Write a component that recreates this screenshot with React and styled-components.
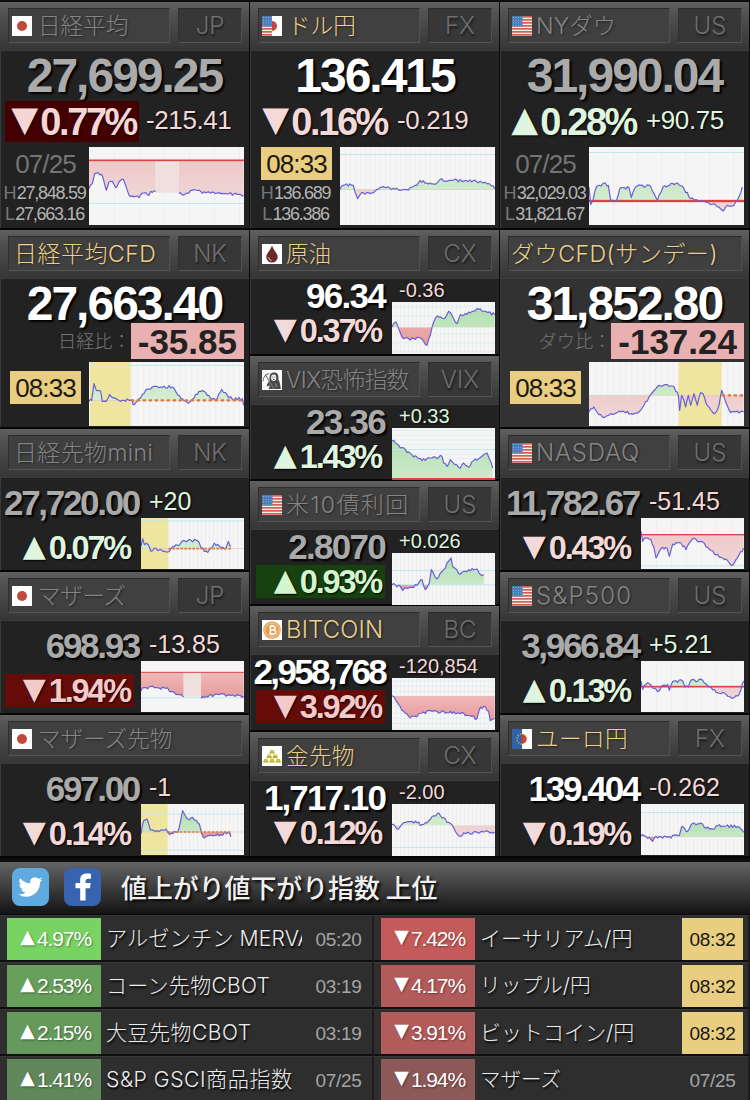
import React from "react";
import styled, { createGlobalStyle, css } from "styled-components";

const Global = createGlobalStyle`
  * { box-sizing: border-box; }
  body { margin: 0; background: #0b0b0b; }
`;

const NUM = `"Liberation Sans", Arial, sans-serif`;
const NAME = `Inter, "Noto Sans CJK JP", sans-serif`;

const UP = "#dff5df";
const DOWN = "#f4d9d9";

const Page = styled.div`
  width: 750px;
  height: 1100px;
  overflow: hidden;
  background: #0d0d0d;
  font-family: ${NUM};
  white-space: nowrap;
`;

const Board = styled.main`
  display: flex;
  padding-top: 2px;
  height: 862px;
`;

const Card = styled.section`
  height: ${(p) => p.$h}px;
  display: flex;
  flex-direction: column;
  background: ${(p) => p.$bg || "#222"};
  border-bottom: 2px solid #060606;
  border-right: 1px solid #0a0a0a;
  box-shadow: inset 1px 0 0 #3a3a3a;
`;

const Head = styled.header`
  flex: 0 0 48px;
  display: flex;
  gap: 8px;
  padding: 6px 7px 7px 8px;
  background: linear-gradient(#606060, #515151 25%, #363636);
  border-bottom: 1px solid #3c3c3c;
`;

const Slot = styled.div`
  height: 35px;
  display: flex;
  align-items: center;
  background: ${(p) => (p.$dark ? "#373737" : "#404040")};
  border: 1px solid;
  border-color: #2c2c2c #505050 #545454 #303030;
`;

const NameSlot = styled(Slot)`
  flex: 1;
  padding-left: ${(p) => p.$pad}px;
  gap: ${(p) => p.$gap}px;
`;

const CodeSlot = styled(Slot)`
  width: 64px;
  justify-content: center;
  font: 300 24px/34px ${NAME};
  color: #6e6e6e;
  text-shadow: 1px 2px 2px #1c1c1c;
`;

const Name = styled.span`
  font: 300 ${(p) => p.$size}px/32px ${NAME};
  letter-spacing: ${(p) => p.$ls}px;
  color: ${(p) => (p.$live ? "#ecd08a" : "#858585")};
  text-shadow: 1px 1px 2px #222;
`;

const Price = styled.div`
  font: bold ${(p) => (p.$big ? 48 : 35)}px / ${(p) => (p.$big ? 46 : 36)}px ${NUM};
  letter-spacing: ${(p) => p.$ls}px;
  color: ${(p) => (p.$live ? "#fff" : "#aaa")};
  text-shadow: 2px 2px 2px #000;
`;

const BigPrice = styled(Price)`
  height: 48px;
  text-align: center;
`;

const Line = styled.div`
  display: flex;
`;

const badgeTone = {
  red: css`background: #660c08; color: #f4c9c9;`,
  darkRed: css`background: #440000; color: #f6d5d5;`,
  green: css`background: #17420f; color: #d3f5cf;`,
};

const Percent = styled.div`
  display: flex;
  justify-content: flex-end;
  align-items: center;
  font: bold ${(p) => (p.$big ? 38 : 32.5)}px / 1 ${NUM};
  letter-spacing: ${(p) => (p.$big ? -2.4 : -2.2)}px;
  width: ${(p) => (p.$big ? 134 : 129)}px;
  height: ${(p) => (p.$big ? 41 : 33)}px;
  padding: ${(p) => (p.$big ? "1px 3px 0 0" : "1px 4px 0 0")};
  color: ${(p) => (p.$up ? UP : DOWN)};
  text-shadow: 1px 1px 2px #000;
  ${(p) => p.$tone && badgeTone[p.$tone]}
`;

const Arrow = styled.span`
  font: ${(p) => p.$size}px/1 "DejaVu Sans", sans-serif;
  letter-spacing: 0;
  margin-right: ${(p) => p.$gap}px;
  margin-bottom: 5px;
`;

const Change = styled.div`
  font: ${(p) => p.$size}px/1.1 ${NUM};
  color: ${(p) => (p.$up ? UP : DOWN)};
  letter-spacing: ${(p) => p.$ls || 0}px;
  text-shadow: 1px 1px 2px #000;
`;

const Side = styled.div`
  width: 89px;
  display: flex;
  flex-direction: column;
  align-items: center;
`;

const Clock = styled.div`
  width: 71px;
  height: 33px;
  margin: ${(p) => p.$top || 0}px 0 3px 2px;
  font: 26px/34px ${NUM};
  letter-spacing: -0.9px;
  text-align: center;
  ${(p) =>
    p.$live
      ? css`background: #e9cd80; color: #1d1a12;`
      : css`color: #757575;`}
`;

const HighLow = styled.div`
  height: 20.5px;
  font: 18px/21px ${NUM};
  letter-spacing: -1.25px;
  color: #b4b4b4;
  b { font-weight: normal; color: #777; margin-right: 1.5px; }
`;

const Plot = styled.svg`
  display: block;
  flex: none;
`;

const BigBody = styled.div`
  padding-top: 2px;
`;

const RateLine = styled(Line)`
  height: 46px;
  padding-left: 5px;
  gap: 7px;
  ${Change} { padding-top: 5px; }
`;

const CompareLine = styled(Line)`
  justify-content: flex-end;
  align-items: flex-start;
  height: 39px;
  margin-top: -6px;
  padding-right: 5px;
`;

const CompareLabel = styled.span`
  font: 300 18.2px/37px ${NAME};
  color: #757575;
`;

const CompareValue = styled.span`
  height: 36px;
  padding: 0 7px;
  font: bold 35px/37px ${NUM};
  color: #222;
  background: #e8b0b0;
`;

const SmallBody = styled.div`
  display: flex;
  justify-content: space-between;
  padding: 0 5px;
`;

const SmallLeft = styled.div`
  width: 135px;
  display: flex;
  flex-direction: column;
  ${Price} {
    margin-top: ${(p) => (p.$mid ? -1.5 : 7)}px;
    margin-right: ${(p) => (p.$mid ? 6 : 1)}px;
    height: ${(p) => (p.$mid ? 36.5 : 36)}px;
    display: flex;
    justify-content: flex-end;
  }
  ${Percent} { margin-top: ${(p) => (p.$mid ? 0 : 10)}px; }
`;

const SmallRight = styled.div`
  width: 103px;
  display: flex;
  flex-direction: column;
  ${Change} {
    height: ${(p) => (p.$mid ? 23 : 40)}px;
    padding-top: ${(p) => (p.$mid ? 0 : 9.5)}px;
    padding-left: ${(p) => (p.$mid ? 7 : 8)}px;
  }
`;

const Column = styled.div`
  width: 250px;
  display: flex;
  flex-direction: column;
  &:nth-child(2) ${BigBody} { padding-left: 1px; }
  &:nth-child(2) ${SmallBody} { padding: 0 4px 0 6px; }
`;

/* ---- charts ---- */

// Adds small repeatable wobble between the given points.
function roughen(points, seed) {
  let s = seed;
  const rnd = () => {
    s = (s * 16807) % 2147483647;
    return s / 2147483647 - 0.5;
  };
  const out = [points[0]];
  for (let i = 1; i < points.length; i++) {
    const [x0, y0] = points[i - 1];
    const [x1, y1] = points[i];
    const n = Math.max(1, Math.round((x1 - x0) / 5));
    for (let k = 1; k <= n; k++) {
      const t = k / n;
      out.push([x0 + (x1 - x0) * t, y0 + (y1 - y0) * t + (k < n ? rnd() * 9 : 0)]);
    }
  }
  return out;
}

const parse = (str) => str.split(" ").map((p) => p.split(",").map(Number));

function Chart({ id, w, h, base, lines, refLine, cyan = [], grid, rules, zone, dots, gap, strong, noBase }) {
  const W = w * 3;
  const H = h * 3;
  const segs = lines.map((l, i) => roughen(parse(l), 77 + i * 13 + id.length * 31));
  const areas = segs
    .map((s) => `M${s[0][0]},${base} ${s.map((p) => `L${p[0]},${p[1]}`).join(" ")} L${s[s.length - 1][0]},${base}Z`)
    .join(" ");
  const stroke = segs.map((s) => "M" + s.map((p) => p.join(",")).join(" L")).join(" ");
  const verticals = [];
  if (grid) for (let x = grid; x < W; x += grid) verticals.push(x);
  const horizontals = [];
  if (rules) for (let y = rules / 2; y < H; y += rules) horizontals.push(y);
  return (
    <Plot width={w} height={h} viewBox={`0 0 ${W} ${H}`} preserveAspectRatio="none">
      <defs>
        <clipPath id={`${id}u`}><rect width={W} height={base} /></clipPath>
        <clipPath id={`${id}d`}><rect y={base} width={W} height={H} /></clipPath>
        <linearGradient id={`${id}g`} x1="0" y1="0" x2="0" y2="1">
          <stop offset="0" stopColor={strong ? "#b4dfb1" : "#c9e8c6"} />
          <stop offset="1" stopColor={strong ? "#cdebcb" : "#d8efd6"} />
        </linearGradient>
        <linearGradient id={`${id}r`} x1="0" y1="0" x2="0" y2="1">
          <stop offset="0" stopColor={strong ? "#f0b9b9" : "#efc8c8"} />
          <stop offset="1" stopColor={strong ? "#e69a9a" : "#eed6d6"} />
        </linearGradient>
      </defs>
      <rect width={W} height={H} fill="#f5f5f5" />
      {verticals.map((x) => <rect key={x} x={x} width="2" height={H} fill="#eaeaea" />)}
      {horizontals.map((y) => <rect key={y} y={y} width={W} height="2" fill="#daeef1" />)}
      {zone && <rect x={zone[0]} width={zone[1] - zone[0]} height={H} fill="#eee5a0" />}
      <path d={areas} fill={`url(#${id}g)`} clipPath={`url(#${id}u)`} />
      <path d={areas} fill={`url(#${id}r)`} clipPath={`url(#${id}d)`} />
      {gap && <rect x={gap[0]} y={base} width={gap[1] - gap[0]} height={gap[2] - base} fill="#efdfdf" />}
      {cyan.map((y) => <rect key={y} y={y - 1} width={W} height="3" fill="#bfe9ec" />)}
      {!noBase && !refLine && <rect y={base - 1} width={W} height="2" fill="#d5cfc0" />}
      {refLine && <rect y={base - refLine / 2} width={W} height={refLine} fill="#dc4444" />}
      <path d={stroke} fill="none" stroke="#6a60d6" strokeWidth="3.6" strokeLinejoin="round" />
      {dots && (
        <line x1={dots[0]} x2={dots[1]} y1={base} y2={base} stroke="#dd7a3c" strokeWidth={w > 110 ? 7 : 5} strokeDasharray={w > 110 ? "10 8" : "8 4"} />
      )}
    </Plot>
  );
}

/* ---- small icons ---- */

const IconSvg = styled.svg`
  display: block;
  flex: none;
  width: 20px;
  height: 20px;
`;

const Stripes = ({ w = 20 }) => (
  <>
    <rect width={w} height="20" fill="#f6eeee" />
    {[0, 1, 2, 3, 4, 5, 6].map((i) => (
      <rect key={i} y={i * 3} width={w} height="1.7" fill="#d4604f" />
    ))}
  </>
);

const Stars = ({ w, h }) => (
  <>
    <rect width={w} height={h} fill="#4a7bb5" />
    {[1.6, 4.2, 6.8, 9.2].map((y) =>
      [1.5, 4, 6.5, 9].filter((x) => x < w && y < h).map((x) => (
        <circle key={`${x}-${y}`} cx={x} cy={y} r="0.5" fill="#a9c3e0" />
      ))
    )}
  </>
);

const icons = {
  jp: (
    <>
      <rect width="20" height="20" fill="#fff" />
      <circle cx="10" cy="10" r="5" fill="#bf4a3b" />
    </>
  ),
  us: (
    <>
      <Stripes />
      <Stars w={10.5} h={10.5} />
    </>
  ),
  usjp: (
    <>
      <rect width="20" height="20" fill="#fff" />
      <Stripes w={10} />
      <Stars w={10} h={10.5} />
      <path d="M10 5a5 5 0 0 1 0 10z" fill="#bf4a3b" />
    </>
  ),
  eujp: (
    <>
      <rect width="20" height="20" fill="#fff" />
      <rect width="10" height="20" fill="#2f62a8" />
      <circle cx="10" cy="10" r="5" fill="none" stroke="#a9b455" strokeWidth="1.4" strokeDasharray="1.4 1.2" />
      <path d="M10 4.300a5.700 5.700 0 0 1 0 11.400z" fill="#fff" />
      <path d="M9.500 5a5.200 5 0 0 1 0 10z" fill="#c8402f" />
    </>
  ),
  oil: (
    <>
      <rect width="20" height="20" fill="#fff" />
      <path d="M10 1.5C8.8 6 4.3 9 4.3 13.2a5.7 5.4 0 0 0 11.4 0C15.7 9 11.2 6 10 1.5z" fill="#69282b" />
      <path d="M6.6 13.2a3.6 3.6 0 0 0 3 3.4" stroke="#e3cfcf" strokeWidth="1" fill="none" />
    </>
  ),
  reaper: (
    <>
      <rect width="20" height="20" fill="#fafafa" />
      <path d="M7.6 10.5C7 5 8.6 2.5 12 2.5s5 2.600 4.400 7c1.400 2.500 2.300 6 2.300 9.500H6.500L8 15.500l-3.500 1 .6-2.200z" fill="#4a4a4a" />
      <ellipse cx="11.700" cy="7.700" rx="2.600" ry="3.300" fill="#f2f2f2" />
      <path d="M10.200 7.200h1M12.400 7.200h1M10.900 9.500h1.800" stroke="#444" strokeWidth=".9" />
      <path d="M3.200 4.500 12 19M1 11.500C1 7 3 4.500 7.500 3.500" stroke="#777" strokeWidth="1.100" fill="none" />
      <path d="M13.500 13.500l1 3.500" stroke="#aaa" strokeWidth=".8" />
    </>
  ),
  btc: (
    <>
      <rect width="20" height="20" fill="#fff" />
      <circle cx="10" cy="10" r="8.800" fill="#e69a4c" />
      <circle cx="10" cy="10" r="7.200" fill="none" stroke="#fbe3c6" strokeWidth=".8" />
      <path d="M7.300 6.200h4a1.900 1.900 0 0 1 0 3.800H8.300M8.300 10h3.400a2 2 0 0 1 0 4H7.300M8.400 6.200V14M9.400 4.800v1.600M11.200 4.800v1.600M9.400 13.800v1.500M11.200 13.800v1.500" fill="none" stroke="#fff" strokeWidth="1.500" />
    </>
  ),
  gold: (
    <>
      <rect width="20" height="20" fill="#fff" />
      {[[7.300, 4], [4.500, 8.600], [10.300, 8.600], [1, 13], [7.200, 13], [13.400, 13]].map(([x, y]) => (
        <g key={`${x}-${y}`}>
          <path d={`M${x + 1.300} ${y}h3l1.400 3.600H${x}z`} fill="#b9b32c" />
          <path d={`M${x + 1.700} ${y + 0.700}h2.200l.2.700h-2.600z`} fill="#e8e48a" />
        </g>
      ))}
    </>
  ),
};

const Icon = ({ kind }) => <IconSvg viewBox="0 0 20 20">{icons[kind]}</IconSvg>;

/* ---- cards ---- */

function CardHead({ name, code, icon, live, size = 22.6, ls = 0, gap = 6, pad }) {
  return (
    <Head>
      <NameSlot $pad={pad ?? (icon ? 3 : 5)} $gap={gap}>
        {icon && <Icon kind={icon} />}
        <Name $live={live} $size={size} $ls={ls}>{name}</Name>
      </NameSlot>
      {code && <CodeSlot $dark>{code}</CodeSlot>}
    </Head>
  );
}

const isUp = (c) => c.startsWith("+");

function Rate({ value, up, big, tone }) {
  return (
    <Percent $big={big} $up={up} $tone={tone}>
      <Arrow $size={big ? 35 : 30} $gap={big ? 2 : 3}>{up ? "▲" : "▼"}</Arrow>
      {value}
    </Percent>
  );
}

function BigCard({ h, head, live, price, rate, tone, change, time, high, low, chart }) {
  const up = isUp(change);
  return (
    <Card $h={h}>
      <CardHead live={live} {...head} />
      <BigBody>
        <BigPrice $big $live={live} $ls={-2}>{price}</BigPrice>
        <RateLine>
          <Rate big value={rate} up={up} tone={tone} />
          <Change $size={26} $ls={-0.4} $up={up}>{change}</Change>
        </RateLine>
        <Line>
          <Side>
            <Clock $live={live}>{time}</Clock>
            <HighLow><b>H</b>{high}</HighLow>
            <HighLow><b>L</b>{low}</HighLow>
          </Side>
          <Chart w={155} h={78} {...chart} />
        </Line>
      </BigBody>
    </Card>
  );
}

function CompareCard({ h, bg, head, price, label, diff, chart }) {
  return (
    <Card $h={h} $bg={bg}>
      <CardHead live {...head} />
      <BigBody>
        <BigPrice $big $live $ls={-2}>{price}</BigPrice>
        <CompareLine>
          <CompareLabel>{label}</CompareLabel>
          <CompareValue>{diff}</CompareValue>
        </CompareLine>
        <Line>
          <Side><Clock $live $top={9}>08:33</Clock></Side>
          <Chart w={155} h={64} {...chart} />
        </Line>
      </BigBody>
    </Card>
  );
}

function SmallCard({ h, mid, head, live, price, ls = -2.3, rate, tone, change, chart }) {
  const up = isUp(change);
  return (
    <Card $h={h}>
      <CardHead live={live} {...head} />
      <SmallBody>
        <SmallLeft $mid={mid}>
          <Price $live={live} $ls={ls}>{price}</Price>
          <Rate value={rate} up={up} tone={tone} />
        </SmallLeft>
        <SmallRight $mid={mid}>
          <Change $size={mid ? 20 : 25} $up={up}>{change}</Change>
          <Chart w={103} h={mid ? 52 : 51} {...chart} />
        </SmallRight>
      </SmallBody>
    </Card>
  );
}

/* ---- ranking ---- */

const RankBar = styled.div`
  height: 53px;
  display: flex;
  align-items: center;
  padding: 0 0 2px 12px;
  background: linear-gradient(#646464, #3c3c3c 50%, #131313);
  border-bottom: 1px solid #060606;
`;

const Social = styled.svg`
  width: 37px;
  height: 38px;
  margin-right: 15px;
  border-radius: 8px;
`;

const RankTitle = styled.h2`
  margin: 0 0 0 5px;
  font: 500 25.9px/50px "Noto Sans CJK JP", sans-serif;
  color: #f0f0f0;
  text-shadow: 2px 2px 3px #000;
`;

const RankGrid = styled.div`
  display: grid;
  grid-template-columns: 374px 376px;
  grid-auto-rows: 47px;
`;

const RankRow = styled.div`
  display: flex;
  align-items: flex-start;
  padding: 3px ${(p) => (p.$left ? 3 : 5)}px 0 7px;
  background: #2e2e2e;
  border-bottom: 2px solid #0f0f0f;
  border-right: 2px solid #1c1c1c;
  border-top: 1px solid #383838;
`;

const RankRate = styled.div`
  flex: 0 0 94px;
  height: 42px;
  margin-top: -1px;
  padding-right: 10px;
  display: flex;
  align-items: center;
  justify-content: flex-end;
  font: 21px/42px ${NUM};
  letter-spacing: -1.1px;
  color: #fff;
  text-shadow: 1px 1px 2px rgba(0, 0, 0, 0.4);
  background: ${(p) => p.$color};
`;

const RankName = styled.div`
  width: ${(p) => (p.$wide ? 196 : 201)}px;
  height: 40px;
  margin-left: 5px;
  overflow: hidden;
  font: 300 ${(p) => p.$size}px/39px ${NAME};
  letter-spacing: ${(p) => p.$ls || 0}px;
  color: #ececec;
  text-shadow: 1px 2px 2px #000;
`;

const RankTime = styled.div`
  width: 61px;
  height: 42px;
  margin: -1px 0 0 auto;
  font: 19px/43px ${NUM};
  letter-spacing: -0.3px;
  text-align: center;
  ${(p) => (p.$live ? css`background: #e9cd80; color: #1a1811;` : css`color: #a5a5a5;`)}
`;

const ranks = [
  { r: "4.97%", up: true, c: "#79d363", n: "アルゼンチン MERVA", t: "05:20", s: 21.2, ls: 0.1 },
  { r: "7.42%", c: "#c45a59", n: "イーサリアム/円", t: "08:32", live: true, s: 21 },
  { r: "2.53%", up: true, c: "#67a05b", n: "コーン先物CBOT", t: "03:19", s: 21, ls: 0.3 },
  { r: "4.17%", c: "#b35b5a", n: "リップル/円", t: "08:32", live: true, s: 20.7 },
  { r: "2.15%", up: true, c: "#659a5c", n: "大豆先物CBOT", t: "03:19", s: 21, ls: 0.5 },
  { r: "3.91%", c: "#b15b5a", n: "ビットコイン/円", t: "08:32", live: true, s: 21 },
  { r: "1.41%", up: true, c: "#61875c", n: "S&P GSCI商品指数", t: "07/25", s: 21.2, ls: 0.5 },
  { r: "1.94%", c: "#8d5858", n: "マザーズ", t: "07/25", s: 20.5 },
];

export default function App() {
  return (
    <Page>
      <Global />
      <Board>
        <Column>
          <BigCard h={228} head={{ name: "日経平均", code: "JP", icon: "jp" }} price="27,699.25" rate="0.77%" tone="darkRed" change="-215.41" time="07/25" high="27,848.59" low="27,663.16"
            chart={{ id: "nk", base: 40, refLine: 5, cyan: [169], grid: 75, gap: [200, 270, 137], lines: ["0,125 10,110 17,80 38,82 52,130 60,105 70,103 80,122 90,105 103,97 110,115 120,145 150,152 160,138 180,145 185,133 200,133", "270,140 278,142 310,130 350,137 380,140 420,140 450,142 464,145"] }} />
          <CompareCard h={199} head={{ name: "日経平均CFD", code: "NK", size: 23, ls: 0.5 }} price="27,663.40" label="日経比：" diff="-35.85"
            chart={{ id: "nkcfd", base: 115, cyan: [10], grid: 18, zone: [3, 125], dots: [125, 465], lines: ["0,118 8,115 15,65 22,85 35,88 40,118 52,118 62,98 80,110 100,115 120,115 130,115 132,128 150,110 170,85 190,75 250,75 262,92 280,110 295,122 310,112 330,88 345,88 355,100 380,115 398,82 415,100 430,112 460,110 464,130"] }} />
          <SmallCard h={143} head={{ name: "日経先物mini", code: "NK", size: 23, ls: 0.35 }} price="27,720.00" rate="0.07%" change="+20"
            chart={{ id: "mini", base: 92, cyan: [8], grid: 12, zone: [0, 82], dots: [82, 270], lines: ["0,85 5,62 10,80 22,80 30,100 40,90 50,98 80,102 90,92 110,82 125,68 170,68 180,90 200,103 220,75 235,85 255,90 262,70 270,85"] }} />
          <SmallCard h={143} head={{ name: "マザーズ", code: "JP", icon: "jp", ls: -0.4 }} price="698.93" rate="1.94%" tone="red" change="-13.85"
            chart={{ id: "moth", base: 34, refLine: 3, strong: true, cyan: [110], gap: [128, 180, 107], lines: ["0,90 10,80 40,80 75,82 95,92 115,102 128,107", "180,112 190,110 220,102 270,103 308,106"] }} />
          <SmallCard h={143} head={{ name: "マザーズ先物", icon: "jp" }} price="697.00" rate="0.14%" change="-1"
            chart={{ id: "mothf", base: 84, strong: true, cyan: [30, 138], grid: 12, zone: [0, 80], dots: [80, 270], lines: ["0,90 8,50 18,45 28,78 50,80 75,75 82,88 110,85 118,55 125,20 140,45 155,40 175,60 182,88 190,102 205,95 240,92 262,85 270,98"] }} />
        </Column>
        <Column>
          <BigCard h={228} live head={{ name: "ドル円", code: "FX", icon: "usjp" }} price="136.415" rate="0.16%" change="-0.219" time="08:33" high="136.689" low="136.386"
            chart={{ id: "fx", base: 128, cyan: [22], grid: 15, lines: ["0,127 10,115 40,115 45,135 53,155 65,137 90,140 105,132 120,122 200,128 215,120 230,115 240,100 260,108 285,112 300,98 330,100 420,103 450,112 464,125"] }} />
          <SmallCard mid h={126} live head={{ name: "原油", code: "CX", icon: "oil", gap: 4 }} price="96.34" ls={-1.7} rate="0.37%" change="-0.36"
            chart={{ id: "oil", base: 76, strong: true, noBase: true, grid: 12, rules: 27, lines: ["0,75 12,60 20,80 30,105 50,110 85,108 95,118 105,130 115,100 125,60 132,45 155,50 170,28 185,50 195,65 205,38 215,40 240,28 260,22 280,28 308,38"] }} />
          <SmallCard mid h={125} head={{ name: "VIX恐怖指数", code: "VIX", icon: "reaper", gap: 4, ls: -0.5 }} price="23.36" ls={-1.7} rate="1.43%" change="+0.33"
            chart={{ id: "vix", base: 153, refLine: 6, strong: true, cyan: [64], rules: 14, lines: ["0,38 20,52 40,65 60,80 80,92 100,97 120,90 150,85 155,105 165,115 175,95 190,110 205,120 215,105 230,118 245,98 260,92 275,80 285,75 292,92 302,120"] }} />
          <SmallCard mid h={125} head={{ name: "米10債利回", code: "US", icon: "us", gap: 4, size: 23, ls: 1.4 }} price="2.8070" ls={-1.7} rate="0.93%" tone="green" change="+0.026"
            chart={{ id: "us10", base: 95, strong: true, noBase: true, grid: 12, cyan: [52, 95], lines: ["0,95 25,100 32,112 50,105 75,97 90,80 100,110 112,90 118,50 135,78 155,50 170,25 177,15 182,40 200,62 230,50 255,48 272,68 275,65"] }} />
          <SmallCard mid h={126} live head={{ name: "BITCOIN", code: "BC", icon: "btc", gap: 4, size: 23.8, ls: 0.2 }} price="2,958,768" ls={-2.7} rate="3.92%" tone="red" change="-120,854"
            chart={{ id: "btc", base: 53, strong: true, noBase: true, grid: 12, rules: 16, lines: ["0,53 12,68 20,80 35,100 50,115 70,115 90,105 120,100 200,105 240,115 255,122 262,95 275,85 290,100 295,128 308,122"] }} />
          <SmallCard mid h={126} live head={{ name: "金先物", code: "CX", icon: "gold", gap: 4, ls: 0.3 }} price="1,717.10" ls={-1.9} rate="0.12%" change="-2.00"
            chart={{ id: "gold", base: 64, grid: 12, cyan: [130], noBase: true, lines: ["0,62 20,75 40,55 60,52 90,62 110,50 137,27 150,42 170,55 180,62 190,82 200,95 225,85 260,88 270,82 308,84"] }} />
        </Column>
        <Column>
          <BigCard h={228} head={{ name: "NYダウ", code: "US", icon: "us", gap: 4, size: 23.2, ls: 0.2 }} price="31,990.04" rate="0.28%" change="+90.75" time="07/25" high="32,029.03" low="31,821.67"
            chart={{ id: "dow", base: 162, refLine: 7, cyan: [16], grid: 72, lines: ["0,120 5,172 12,160 22,120 45,108 58,115 65,160 82,162 92,125 120,122 127,152 140,120 155,115 185,118 205,160 222,120 265,108 285,125 305,155 330,162 370,172 390,180 402,192 415,175 435,175 445,160 460,120"] }} />
          <CompareCard h={199} bg="#323232" head={{ name: "ダウCFD(サンデー)", size: 23.2, ls: 0.4, pad: 2 }} price="31,852.80" label="ダウ比：" diff="-137.24"
            chart={{ id: "dowcfd", base: 100, grid: 18, zone: [268, 398], dots: [398, 465], lines: ["0,150 15,135 30,158 45,167 65,155 95,150 135,155 155,145 180,105 205,75 235,68 250,72 265,90 268,100", "268,100 272,145 278,100 290,135 298,100 305,130 315,95 325,130 335,92 342,95 355,130 370,150 380,152 390,130 398,85 410,120 425,152 440,150 464,150"] }} />
          <SmallCard h={143} head={{ name: "NASDAQ", code: "US", icon: "us", gap: 4, size: 24, ls: 0.7 }} price="11,782.67" rate="0.43%" change="-51.45"
            chart={{ id: "ndq", base: 50, refLine: 4, grid: 45, cyan: [143], lines: ["0,40 5,70 15,60 30,65 38,85 45,120 55,100 65,88 78,90 85,115 95,78 120,75 135,95 155,62 180,70 200,88 225,110 245,120 265,135 275,142 285,125 308,90"] }} />
          <SmallCard h={143} head={{ name: "S&P500", code: "US", icon: "us", gap: 4, size: 24, ls: 1.2 }} price="3,966.84" rate="0.13%" change="+5.21"
            chart={{ id: "spx", base: 77, refLine: 5, grid: 45, lines: ["0,60 5,85 20,65 30,72 50,92 62,75 80,70 85,88 95,62 125,60 132,78 142,78 150,58 185,58 205,78 230,95 255,100 275,112 290,105 300,85 308,60"] }} />
          <SmallCard h={143} live head={{ name: "ユーロ円", code: "FX", icon: "eujp", gap: 4, ls: 0.4 }} price="139.404" rate="0.19%" change="-0.262"
            chart={{ id: "eur", base: 98, strong: true, grid: 12, cyan: [25], lines: ["0,95 25,100 35,112 45,97 80,100 115,95 122,68 140,82 150,62 180,57 190,70 220,75 230,65 290,68 300,75 308,85"] }} />
        </Column>
      </Board>
      <RankBar>
        <Social viewBox="0 0 37 38">
          <rect width="37" height="38" fill="#5fabdf" />
          <path transform="translate(6.500 7)" fill="#fff" d="M23.950 4.570a10 10 0 0 1-2.820.770 4.960 4.960 0 0 0 2.160-2.720c-.950.550-2 .950-3.130 1.180a4.920 4.920 0 0 0-8.380 4.480C7.690 8.100 4.070 6.130 1.640 3.160a4.920 4.920 0 0 0 1.520 6.570 4.900 4.900 0 0 1-2.230-.610v.060a4.920 4.920 0 0 0 3.950 4.830 5 5 0 0 1-2.210.080 4.930 4.930 0 0 0 4.600 3.420A9.870 9.870 0 0 1 0 19.540a14 14 0 0 0 7.550 2.210c9.050 0 14-7.500 14-13.980l-.020-.640a9.940 9.940 0 0 0 2.420-2.560z" />
        </Social>
        <Social viewBox="0 0 37 38">
          <rect width="37" height="38" fill="#3763b0" />
          <path fill="#fff" d="M16.200 32.500V20.300h-4.700v-5.200h4.700v-3.300c0-4.200 2.400-6.300 6.300-6.300 1.800 0 3 .1 4.500.3v4.900h-2.700c-2.100 0-2.700.9-2.700 2.500v1.900h5.100l-.7 5.200h-4.400v12.200z" />
        </Social>
        <RankTitle>値上がり値下がり指数 上位</RankTitle>
      </RankBar>
      <RankGrid>
        {ranks.map((k) => (
          <RankRow key={k.r + k.n} $left={k.up}>
            <RankRate $color={k.c}>
              <Arrow $size={19} $gap={2}>{k.up ? "▲" : "▼"}</Arrow>
              {k.r}
            </RankRate>
            <RankName $size={k.s} $ls={k.ls} $wide={k.up}>{k.n}</RankName>
            <RankTime $live={k.live}>{k.t}</RankTime>
          </RankRow>
        ))}
      </RankGrid>
    </Page>
  );
}
